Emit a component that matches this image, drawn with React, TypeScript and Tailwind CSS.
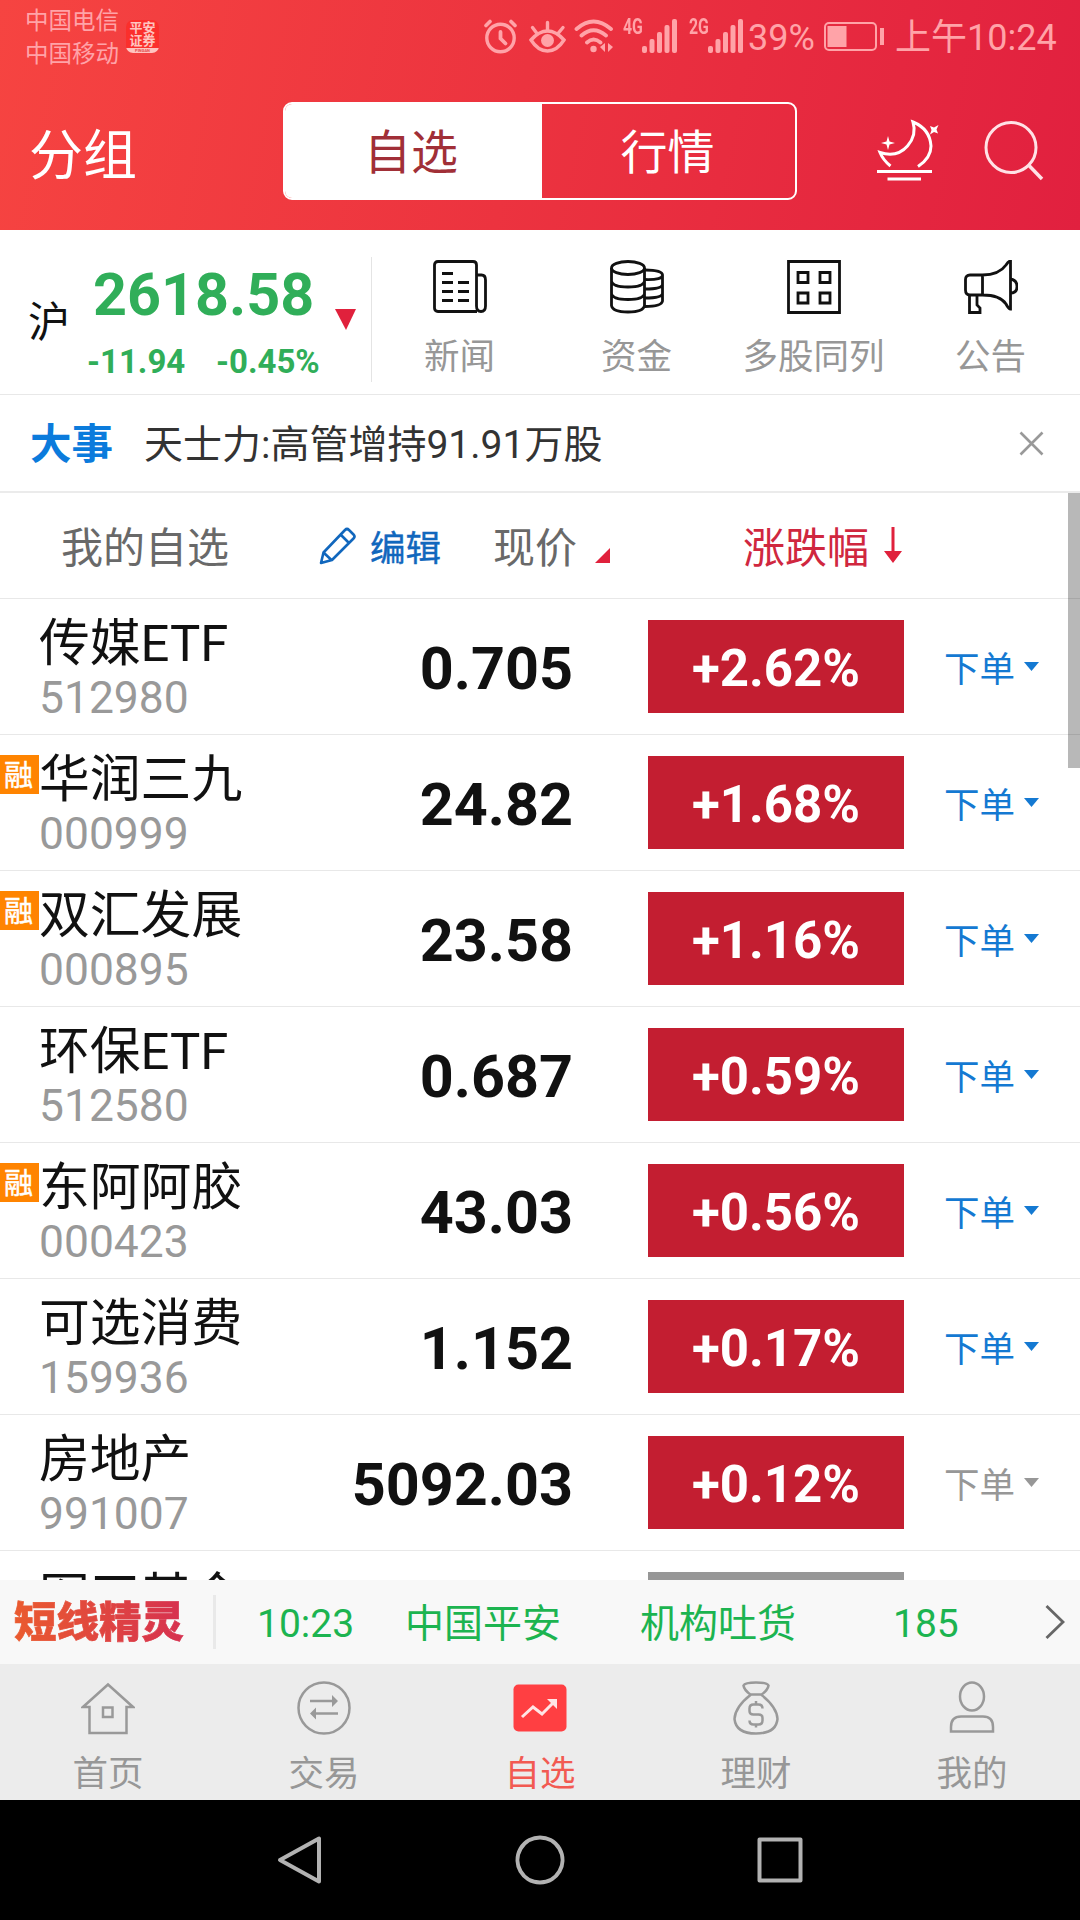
import React from 'react';

const T = ({ children, className = '' }: { children: React.ReactNode; className?: string }) => (
  <span className={`whitespace-nowrap ${className}`}>{children}</span>
);

const Bars = () => (
  <svg width="35" height="34" viewBox="0 0 35 34" fill="#ffa3a8">
    <rect x="0" y="27" width="5" height="7" rx="2" />
    <rect x="7.500" y="20" width="5" height="14" rx="2" />
    <rect x="15" y="13" width="5" height="21" rx="2" />
    <rect x="22.500" y="6" width="5" height="28" rx="2" />
    <rect x="30" y="0" width="5" height="34" rx="2" />
  </svg>
);

const Status = () => (
  <div className="flex h-[75px] text-[#ffa3a8]">
    <div className="ml-[25px] mt-[5px] flex w-[101px] flex-col text-[23.5px] leading-[33px]">
      <T>中国电信</T>
      <T>中国移动</T>
    </div>
    <div className="mt-5 flex h-[33px] w-[33px] flex-col items-center overflow-hidden rounded-[7px] bg-[#fb2f2c] pt-[2px] text-[13px] font-bold leading-[12.5px] text-[#ffc4c0]">
      <T>平安</T>
      <T>证券</T>
      <span className="mt-auto h-[5px] w-[33px] bg-[#ffc4c0] text-center text-[4px] leading-[5px] text-[#e34a48]">PINGAN</span>
    </div>
    <svg className="ml-[325px] mt-[19px]" width="34" height="35" viewBox="0 0 34 35" fill="none" stroke="#ffa3a8" strokeLinecap="round">
      <circle cx="16.500" cy="19" r="13.700" strokeWidth="3.400" />
      <path d="M16.500 13v6.500l5 5" strokeWidth="3.800" />
      <path d="M2 6.500l4-4M31 6.500l-4-4" strokeWidth="3.600" />
    </svg>
    <svg className="ml-[11px] mt-[19px]" width="38" height="35" viewBox="0 0 38 35" fill="none" stroke="#ffa3a8" strokeWidth="3.400" strokeLinecap="round">
      <path d="M2 21Q10 12 18.500 12T35 21Q28 32 18.500 32T2 21Z" />
      <circle cx="18.500" cy="21.500" r="6.500" fill="#ffa3a8" stroke="none" />
      <path d="M18.500 3.500v8M3.500 8.500l4.500 6M34 8.500l-5 6" />
    </svg>
    <svg className="ml-[7px] mt-[18px]" width="41" height="36" viewBox="0 0 41 36" fill="none" stroke="#ffa3a8" strokeWidth="3.800" strokeLinecap="round">
      <path d="M2.500 11Q19.500-4 37 11M7.500 17.500Q19.500 7 32 17.500M13 24.500q6.500-6 13.500 0" />
      <circle cx="19.500" cy="31" r="3.200" fill="#ffa3a8" stroke="none" />
      <path d="M31 25v9l-5-5zM34 25v9l5-5z" fill="#ffa3a8" stroke="none" />
    </svg>
    <T className="ml-[8px] mt-[17px] w-[18px] origin-left scale-x-[.72] text-[22px] font-bold leading-[20px]">4G</T>
    <div className="ml-px mt-[19px]"><Bars /></div>
    <T className="ml-[12px] mt-[17px] w-[18px] origin-left scale-x-[.72] text-[22px] font-bold leading-[20px]">2G</T>
    <div className="ml-px mt-[19px]"><Bars /></div>
    <T className="ml-[5px] mt-[17px] w-[76px] text-[36px] leading-[42px]">39%</T>
    <svg className="mt-[21px]" width="62" height="32" viewBox="0 0 62 32" fill="none" stroke="#ffa3a8" strokeWidth="2">
      <rect x="1" y="2" width="51" height="27" rx="4" />
      <path d="M3.500 5h19v21h-19zM56 7h4v17h-4z" fill="#ffa3a8" stroke="none" />
    </svg>
    <T className="ml-[9px] mt-[17px] text-[36px] leading-[42px]">上午10:24</T>
  </div>
);

const Header = () => (
  <header className="h-[230px] bg-[linear-gradient(102deg,#f64441_0%,#ec333f_48%,#e1203f_100%)]">
    <Status />
    <div className="flex h-[155px] items-start pt-[27px] text-white">
      <T className="ml-[29px] mt-[17px] w-[254px] text-[54px] leading-[76px]">分组</T>
      <div className="flex h-[98px] w-[514px] overflow-hidden rounded-[9px] border-2 border-white text-[47px]">
        <div className="flex w-[257px] items-center justify-center bg-white pr-[5px] pt-[5px] text-[#a12f37]"><T>自选</T></div>
        <div className="flex flex-1 items-center justify-center pr-[2px] pt-[5px]"><T>行情</T></div>
      </div>
      <svg className="ml-[79px] mt-[16px]" width="66" height="66" viewBox="0 0 66 66" fill="none" stroke="#fff" strokeWidth="3">
        <path d="M14.500 48Q7 42 4 34.500Q21 40 31.500 28Q41 17 37 4Q54 11 55 28Q55 40 42 48.500" />
        <path d="M1 53.500h55M11.500 61h33.500" />
        <path d="M12 18l1.500 5.500 5.500 1.500-5.500 1.500L12 32l-1.500-5.500L5 25l5.500-1.500zM54 8l4 1.500 4.500-2.500-2 4.500 1.500 4-4-1.500-4 2.500 1.500-4.500z" fill="#fff" stroke="none" />
      </svg>
      <svg className="ml-[42px] mt-[18px]" width="62" height="64" viewBox="0 0 62 64" fill="none" stroke="#ffe2e6" strokeWidth="3">
        <circle cx="27" cy="27.500" r="25" />
        <path d="M44.500 45L58 59" strokeWidth="3.500" />
      </svg>
    </div>
  </header>
);

const quick = [
  {
    label: '新闻',
    icon: (
      <>
        <path d="M44 51.500H5q-3.500 0-3.500-3.500V5Q1.500 1.500 5 1.500H40q3.500 0 3.500 3.500V46q0 5.500 4.500 5.500t4.500-5.500V20q0-5-4-5h-5" />
        <path d="M9 13.500h11M9 22.500h11M9 31.500h11M9 40.500h11M25 22.500h11M25 31.500h11M25 40.500h11" />
      </>
    ),
  },
  {
    label: '资金',
    icon: (
      <>
        <ellipse cx="18" cy="8" rx="16.500" ry="6.500" />
        <path d="M1.500 8v37.500q1 6.500 16.500 6.500t16.500-6.500V8M1.500 21q1 6 16.500 6t16.500-6M1.500 33.500q1 6 16.500 6t16.500-6" />
        <path d="M35 10q17 0 17.500 5T35 19.500M52.500 15v26q-1 5.500-17.500 5.500M35 29q17 0 17.500-4.500M35 38q17 0 17.500-4.500" />
      </>
    ),
  },
  {
    label: '多股同列',
    icon: (
      <path d="M1.500 1.500h51v51h-51zM11 12.500h10v10h-10zM33 12.500h10v10h-10zM11 33h10v10h-10zM33 33h10v10h-10z" />
    ),
  },
  {
    label: '公告',
    icon: (
      <>
        <path d="M18.500 15H6q-4.500 0-4.500 4.500V30q0 5 4.500 5h12.500zM18.500 15Q35 15 42 5q2.500-4 4.500-4v48q-2 0-4.500-5Q36 35 18.500 35" />
        <path d="M46.500 19Q53 20 53 26.500T46.500 33M5.500 35v17.500h10.500V48l-3-3V35" />
      </>
    ),
  },
];

const IndexBar = () => (
  <section className="flex h-[165px] border-b border-[#e8e8e8]">
    <T className="ml-[28px] mt-[69px] w-[60px] text-[42px] leading-[48px] text-[#111]">沪</T>
    <div className="w-[244px] font-bold text-[#30ae59]">
      <div className="mt-[30px] flex h-[70px] items-center pl-[5px] text-[59.300px]"><T>2618.58</T></div>
      <div className="-ml-px mt-[12px] flex h-[40px] items-center text-[33px]">
        <T className="w-[129px]">-11.94</T>
        <T>-0.45%</T>
      </div>
    </div>
    <svg className="ml-[3px] mt-[79px]" width="22" height="22" viewBox="0 0 22 22" fill="#e0213c"><path d="M0 0h21L11 21z" /></svg>
    <div className="ml-[14px] mt-[27px] h-[125px] w-px bg-[#e4e4e4]" />
    <div className="-ml-px flex">
      {quick.map((q) => (
        <div key={q.label} className="flex w-[177px] flex-col items-center pt-[30px]">
          <svg width="54" height="54" viewBox="0 0 54 54" fill="none" stroke="#111" strokeWidth="2.800">{q.icon}</svg>
          <T className="mt-[20px] text-[35.500px] leading-[46px] text-[#979797]">{q.label}</T>
        </div>
      ))}
    </div>
  </section>
);

const News = () => (
  <section className="flex h-[98px] items-center border-b-[2px] border-[#ebebeb]">
    <T className="ml-[30px] mt-[5px] w-[114px] text-[41.500px] font-bold text-[#0b7bdc]">大事</T>
    <T className="mt-[5px] flex-1 text-[39px] text-[#333]">天士力:高管增持91.91万股</T>
    <svg className="mr-[36px]" width="25" height="25" viewBox="0 0 25 25" stroke="#999" strokeWidth="2.600"><path d="M1.500 1.500l22 22M23.500 1.500l-22 22" /></svg>
  </section>
);

const ListHead = () => (
  <div className="flex h-[106px] items-center border-b border-[#e8e8e8] text-[42px] text-[#696969]">
    <T className="ml-[61px] mt-[6px] w-[258px]">我的自选</T>
    <svg width="37" height="38" viewBox="0 0 37 38" fill="none" stroke="#1167bd" strokeWidth="2.600" strokeLinejoin="round">
      <path d="M2 36L4.500 25.500L26 3q2-2 4 0l4.500 4.500q2 2 0 4L13 33zM4.500 25.500l8.500 8M22 8l8.500 8.500" />
    </svg>
    <T className="ml-[14px] mt-[8px] w-[123px] text-[35.500px] text-[#1167bd] [-webkit-text-stroke:0.4px_#1167bd]">编辑</T>
    <T className="mt-[6px] w-[102px]">现价</T>
    <svg className="mt-[19px]" width="15" height="15" viewBox="0 0 15 15" fill="#e0213c"><path d="M15 0v15H0z" /></svg>
    <T className="ml-[133px] mt-[6px] w-[141px] text-[#d0273f]">涨跌幅</T>
    <svg className="mb-[2px]" width="18" height="36" viewBox="0 0 18 36" fill="#e0213c"><path d="M7.500 0h3v24H18L9 36 0 24h7.500z" /></svg>
  </div>
);

const stocks = [
  { name: '传媒ETF', code: '512980', price: '0.705', pct: '+2.62%' },
  { name: '华润三九', code: '000999', price: '24.82', pct: '+1.68%', margin: true },
  { name: '双汇发展', code: '000895', price: '23.58', pct: '+1.16%', margin: true },
  { name: '环保ETF', code: '512580', price: '0.687', pct: '+0.59%' },
  { name: '东阿阿胶', code: '000423', price: '43.03', pct: '+0.56%', margin: true },
  { name: '可选消费', code: '159936', price: '1.152', pct: '+0.17%' },
  { name: '房地产', code: '991007', price: '5092.03', pct: '+0.12%', off: true },
];

const Stocks = () => (
  <div className="h-[981px] overflow-hidden">
    {stocks.map((s) => (
      <div key={s.code} className="flex h-[136px] border-b border-[#e8e8e8]">
        <div className="w-[39px] pt-[20px]">
          {s.margin && <div className="flex h-[39px] items-center justify-center bg-[#ff8400] pr-[2px] pt-[5px] text-[29px] text-white [-webkit-text-stroke:0.5px_#fff]"><T>融</T></div>}
        </div>
        <div className="flex w-[240px] flex-col">
          <T className="mt-[17px] text-[50.800px] leading-[56px] text-[#111]">{s.name}</T>
          <T className="text-[44.400px] leading-[52px] text-[#999]">{s.code}</T>
        </div>
        <T className="mt-[31px] w-[294px] text-right text-[59.300px] font-bold leading-[78px] text-[#111]">{s.price}</T>
        <div className="ml-[75px] mt-[21px] flex h-[93px] w-[256px] items-center justify-center bg-[#c31e31] pt-[6px] text-[51px] font-bold text-white"><T>{s.pct}</T></div>
        <div className={`ml-[40px] flex items-center text-[35.500px] ${s.off ? 'text-[#979797]' : 'text-[#1479d2]'}`}>
          <T className="mt-[9px] w-[80px]">下单</T>
          <svg width="15" height="9" viewBox="0 0 15 9" fill="currentColor"><path d="M0 0h15L7.500 9z" /></svg>
        </div>
      </div>
    ))}
    <div className="flex h-[136px]">
      <T className="ml-[39px] mt-[19px] w-[609px] text-[50.800px] leading-[56px] text-[#111]">图天基金</T>
      <div className="mt-[21px] h-[93px] w-[256px] bg-[#979797]" />
    </div>
  </div>
);

const Ticker = () => (
  <div className="flex h-[84px] items-center bg-[#f8f8f8] text-[39px] text-[#1cb450]">
    <T className="ml-[14px] mt-[2px] w-[199px]"><span className="bg-[linear-gradient(90deg,#ea5b2f,#d63150)] bg-clip-text text-[42.500px] font-black text-transparent [-webkit-text-stroke:0.700px_transparent]">短线精灵</span></T>
    <div className="h-[54px] w-[3px] bg-[#e9e9e9]" />
    <T className="ml-[41px] mt-[4px] w-[148px]">10:23</T>
    <T className="mt-[4px] w-[235px]">中国平安</T>
    <T className="mt-[4px] w-[253px]">机构吐货</T>
    <T className="mt-[4px] w-[152px]">185</T>
    <svg width="20" height="36" viewBox="0 0 20 36" fill="none" stroke="#666" strokeWidth="2.800"><path d="M1.500 2L18 18 1.500 34" /></svg>
  </div>
);

const tabs = [
  { label: '首页', icon: <path d="M27 3.500L52 26H45.500V52H8.500V26H2zM22 26.500h9.500v9.500H22z" /> },
  {
    label: '交易',
    icon: (
      <>
        <circle cx="27" cy="27" r="25.500" />
        <path d="M13 20h25M16 32.500h25" />
        <path d="M35 14v12l6-6zM19 26.500v12l-6-6z" fill="#999" stroke="none" />
      </>
    ),
  },
  {
    label: '自选',
    on: true,
    icon: (
      <>
        <rect x="0.500" y="3.500" width="53" height="47" rx="5" fill="#ff3f42" stroke="none" />
        <path d="M9 36l11-10 9 7L40 22" stroke="#ffe5e5" strokeWidth="3" />
        <path d="M34 18h10v10z" fill="#ffe5e5" stroke="none" />
      </>
    ),
  },
  {
    label: '理财',
    icon: (
      <>
        <path d="M22 14q-7-5-7.500-9.500Q16 1.500 27 1.500T39.500 4.500Q39 9 32 14M22 13.500h10Q48 26 48.500 38 47 52.500 27 52.500T5.500 38Q6 26 22 13.500z" />
        <path d="M33.500 27.500q0-4-4-4h-5q-4 0-4 4v2.500q0 3.500 4 3.500h5q4 0 4 3.500v2.500q0 4-4 4h-5q-4 0-4-4M27 20v3.500M27 43.500v3" />
      </>
    ),
  },
  {
    label: '我的',
    icon: (
      <>
        <ellipse cx="27" cy="15.500" rx="12" ry="14" />
        <path d="M6 50.500V46q0-10.500 10-10.500h22q10 0 10 10.500v4.500z" />
      </>
    ),
  },
];

const Tabs = () => (
  <nav className="grid h-[136px] grid-cols-5 bg-[#ececec]">
    {tabs.map((t) => (
      <div key={t.label} className="flex flex-col items-center pt-[17px]">
        <svg width="54" height="54" viewBox="0 0 54 54" fill="none" stroke="#999" strokeWidth="2.500">{t.icon}</svg>
        <T className={`mt-[16px] text-[35.500px] leading-[46px] ${t.on ? 'text-[#f25a52]' : 'text-[#979797]'}`}>{t.label}</T>
      </div>
    ))}
  </nav>
);

const SystemNav = () => (
  <div className="flex h-[120px] items-center justify-center gap-[190px] bg-black">
    {['M44 3.500v43L5 25z', 'M25 2.500a22.500 22.500 0 1 0 .01 0z', 'M4.500 4.500h41v41h-41z'].map((d) => (
      <svg key={d} width="50" height="50" viewBox="0 0 50 50" fill="none" stroke="#b2b2b2" strokeWidth="4" strokeLinejoin="round"><path d={d} /></svg>
    ))}
  </div>
);

export default function App() {
  return (
    <div className="relative h-[1920px] w-[1080px] overflow-hidden bg-white font-['Roboto','Noto_Sans_CJK_SC',sans-serif]">
      <Header />
      <IndexBar />
      <News />
      <ListHead />
      <Stocks />
      <Ticker />
      <Tabs />
      <SystemNav />
      <div className="absolute right-0 top-[493px] h-[275px] w-[12px] bg-black/28" />
    </div>
  );
}
